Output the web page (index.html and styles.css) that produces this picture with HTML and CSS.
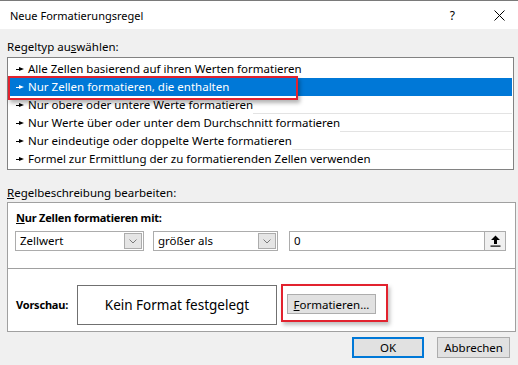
FILE: index.html
```html
<!DOCTYPE html>
<html lang="de">
<head>
  <meta charset="UTF-8">
  <title>Neue Formatierungsregel</title>
  <link rel="stylesheet" href="styles.css">
</head>
<body>
  <div class="dialog">
    <div class="titlebar">
      <span class="title">Neue Formatierungsregel</span>
      <span class="help">?</span>
      <svg class="close" width="11" height="11" viewBox="0 0 11 11"><path d="M0.5 0.5 L10.5 10.5 M10.5 0.5 L0.5 10.5" stroke="#000" stroke-width="1"/></svg>
    </div>

    <div class="main">
      <div class="label">Regeltyp au<u>s</u>wählen:</div>
      <div class="rulelist">
        <div class="rule"><span class="txt"><i class="arrow"></i>Alle Zellen basierend auf ihren Werten formatieren</span></div>
        <div class="rule selected"><span class="txt"><i class="arrow"></i>Nur Zellen formatieren, die enthalten</span></div>
        <div class="rule sep"><span class="txt"><i class="arrow"></i>Nur obere oder untere Werte formatieren</span></div>
        <div class="rule sep"><span class="txt"><i class="arrow"></i>Nur Werte über oder unter dem Durchschnitt formatieren</span></div>
        <div class="rule sep"><span class="txt"><i class="arrow"></i>Nur eindeutige oder doppelte Werte formatieren</span></div>
        <div class="rule"><span class="txt"><i class="arrow"></i>Formel zur Ermittlung der zu formatierenden Zellen verwenden</span></div>
        <div class="mark"></div>
      </div>

      <div class="label label-desc"><u>R</u>egelbeschreibung bearbeiten:</div>
      <div class="desc">
        <div class="desc-top">
          <div class="desc-title"><u>N</u>ur Zellen formatieren mit:</div>
          <div class="fields">
            <div class="combo combo-a">
              <span class="combo-val">Zellwert</span>
              <span class="drop"><svg width="8" height="5" viewBox="0 0 8 5"><path d="M0.5 0.5 L4 4 L7.5 0.5" fill="none" stroke="#7a7a7a" stroke-width="1"/></svg></span>
            </div>
            <div class="combo combo-b">
              <span class="combo-val">größer als</span>
              <span class="drop"><svg width="8" height="5" viewBox="0 0 8 5"><path d="M0.5 0.5 L4 4 L7.5 0.5" fill="none" stroke="#7a7a7a" stroke-width="1"/></svg></span>
            </div>
            <div class="valuebox">
              <span class="combo-val">0</span>
              <span class="pick"><svg width="11" height="12" viewBox="0 0 11 12"><path d="M5.5 0.5 L10 5 L7 5 L7 9 L4 9 L4 5 L1 5 Z" fill="#000"/><rect x="0.5" y="10.5" width="10" height="1.2" fill="#000"/></svg></span>
            </div>
          </div>
        </div>
        <div class="desc-bottom">
          <span class="preview-label">Vorschau:</span>
          <div class="preview">Kein Format festgelegt</div>
          <div class="highlight">
            <button class="btn btn-format"><u>F</u>ormatieren...</button>
          </div>
        </div>
      </div>

      <div class="actions">
        <button class="btn btn-ok">OK</button>
        <button class="btn">Abbrechen</button>
      </div>
    </div>
  </div>
</body>
</html>
```

FILE: styles.css
```css
body {
  margin: 0;
  font-family: "Noto Sans", "Open Sans", sans-serif;
  font-size: 11.5px;
  color: #000;
  background: #f0f0f0;
}

.dialog {
  width: 518px;
  height: 365px;
  box-sizing: border-box;
  border-top: 1px solid #7a7a7a;
  background: #f0f0f0;
  overflow: hidden;
}

.titlebar {
  height: 28px;
  background: #fff;
  display: flex;
  align-items: center;
  padding-left: 10px;
}

.title {
  font-size: 11px;
  flex: 1;
}

.help {
  font-size: 12px;
  margin-right: 39px;
}

.close {
  margin-right: 13px;
}

.main {
  padding: 0 2px 0 7px;
}

.label {
  padding-top: 10px;
  line-height: 16px;
  height: 16px;
}

.label-desc {
  padding-top: 15px;
}

.rulelist {
  position: relative;
  margin-top: 2px;
  margin-right: 2px;
  height: 113px;
  box-sizing: border-box;
  border: 1px solid #828282;
  background: #fff;
  padding: 2px 1px;
}

.rule {
  display: flex;
  height: 18px;
  line-height: 18px;
  white-space: nowrap;
}

.rule::after {
  content: "";
  flex: 1;
}

.rule.sep::after {
  border-bottom: 1px solid #e3e3e3;
  height: 17px;
}

.txt {
  padding-left: 7px;
}

.arrow {
  display: inline-block;
  width: 8px;
  height: 5px;
  margin-right: 4px;
  vertical-align: 1px;
  background:
    linear-gradient(#000, #000) 0 2px / 4px 1px no-repeat;
  position: relative;
}

.arrow::after {
  content: "";
  position: absolute;
  left: 3px;
  top: 0;
  border-left: 5px solid #000;
  border-top: 2.5px solid transparent;
  border-bottom: 2.5px solid transparent;
}

.rule.selected {
  background: #0078d7;
  color: #fff;
}

.rule.selected .arrow {
  background: linear-gradient(#fff, #fff) 0 2px / 4px 1px no-repeat;
}

.rule.selected .arrow::after {
  border-left-color: #fff;
}

.mark {
  position: absolute;
  left: 0;
  top: 18px;
  width: 290px;
  height: 24px;
  box-sizing: border-box;
  border: 2px solid #e2222e;
  box-shadow: 2px 3px 4px rgba(0, 0, 0, 0.3);
}

.desc {
  margin-top: 1px;
  border: 1px solid #a0a0a0;
  background: #fff;
}

.desc-top {
  padding: 7px 8px 17px 7px;
  border-bottom: 1px solid #a0a0a0;
}

.desc-title {
  font-weight: bold;
  font-size: 11px;
  letter-spacing: -0.2px;
  line-height: 16px;
  padding-left: 1px;
}

.fields {
  display: flex;
  margin-top: 5px;
}

.combo,
.valuebox {
  height: 20px;
  box-sizing: border-box;
  border: 1px solid #acacac;
  display: flex;
  align-items: center;
  background: #fff;
}

.combo-a {
  width: 129px;
}

.combo-b {
  width: 125px;
  margin-left: 9px;
}

.valuebox {
  width: 217px;
  margin-left: 11px;
}

.combo-val {
  flex: 1;
  padding-left: 4px;
  line-height: 18px;
}

.drop {
  width: 18px;
  height: 16px;
  margin-right: 1px;
  box-sizing: border-box;
  border: 1px solid #acacac;
  background: #e5e5e5;
  display: flex;
  align-items: center;
  justify-content: center;
}

.pick {
  width: 21px;
  height: 18px;
  box-sizing: border-box;
  border-left: 1px solid #acacac;
  background: #f0f0f0;
  display: flex;
  align-items: center;
  justify-content: center;
}

.desc-bottom {
  display: flex;
  align-items: flex-start;
  padding: 16px 0 6px 8px;
}

.preview-label {
  font-weight: bold;
  font-size: 11px;
  letter-spacing: -0.2px;
  width: 61px;
  line-height: 40px;
}

.preview {
  width: 200px;
  height: 40px;
  box-sizing: border-box;
  border: 1px solid #707070;
  font-size: 13.5px;
  line-height: 38px;
  text-align: center;
}

.highlight {
  margin: -1px 0 0 4px;
  padding: 8px 10px 6px 4px;
  border: 2px solid #e2222e;
  box-shadow: 2px 3px 4px rgba(0, 0, 0, 0.25);
}

.btn {
  font-family: inherit;
  font-size: 11.5px;
  color: #000;
  height: 20px;
  box-sizing: border-box;
  padding: 0;
  border: 1px solid #adadad;
  background: #e1e1e1;
  display: block;
}

.btn-format {
  width: 89px;
}

.actions {
  display: flex;
  justify-content: flex-end;
  gap: 13px;
  margin-top: 5px;
  padding-right: 6px;
}

.actions .btn {
  width: 73px;
  height: 21px;
}

.actions .btn-ok {
  width: 72px;
  border: 2px solid #0078d7;
}
```
